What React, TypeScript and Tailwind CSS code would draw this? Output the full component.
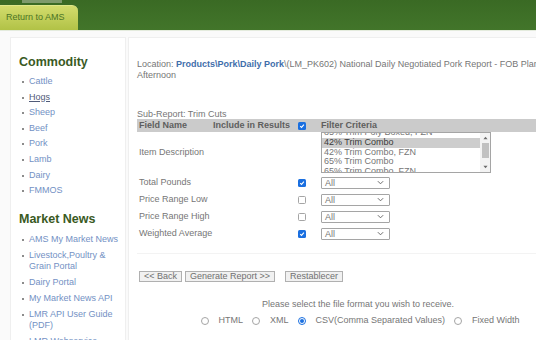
import type { ReactNode } from "react";

const COMMODITIES = ["Cattle", "Hogs", "Sheep", "Beef", "Pork", "Lamb", "Dairy", "FMMOS"];
const MARKET_NEWS = [
  "AMS My Market News",
  "Livestock,Poultry & Grain Portal",
  "Dairy Portal",
  "My Market News API",
  "LMR API User Guide (PDF)",
  "LMR Webservice",
];
const ITEMS = ["85% Trim Poly Boxed, FZN", "42% Trim Combo", "42% Trim Combo, FZN", "65% Trim Combo", "65% Trim Combo, FZN"];
const FIELDS = [
  { name: "Total Pounds", on: true },
  { name: "Price Range Low", on: false },
  { name: "Price Range High", on: false },
  { name: "Weighted Average", on: true },
];

function Check({ on }: { on: boolean }) {
  return on ? (
    <span className="flex h-[8px] w-[8px] items-center justify-center rounded-[1.5px] bg-[#1a6fe0]">
      <svg width="6" height="6" viewBox="0 0 10 10">
        <path d="M2 5.2 L4.2 7.4 L8.2 2.8" fill="none" stroke="white" strokeWidth="1.8" />
      </svg>
    </span>
  ) : (
    <span className="block h-[8px] w-[8px] rounded-[1.5px] border border-[#a5a5a5] bg-white" />
  );
}

function Radio({ on, children }: { on?: boolean; children: ReactNode }) {
  return (
    <span className="flex items-center gap-[10px]">
      {on ? (
        <span className="flex h-[8px] w-[8px] items-center justify-center rounded-full border border-[#1a6fe0]">
          <span className="h-[4px] w-[4px] rounded-full bg-[#1a6fe0]" />
        </span>
      ) : (
        <span className="block h-[8px] w-[8px] rounded-full border border-[#a5a5a5] bg-white" />
      )}
      <span>{children}</span>
    </span>
  );
}

function SelectAll() {
  return (
    <div className="flex h-[12px] w-[69px] items-center justify-between rounded-[1px] border border-[#a5a5a5] bg-white pl-[3px] pr-[5px]">
      <span className="leading-[10px]">All</span>
      <svg width="7" height="5" viewBox="0 0 8 5">
        <path d="M1 1 L4 4 L7 1" fill="none" stroke="#666" strokeWidth="1.1" />
      </svg>
    </div>
  );
}

function Btn({ children }: { children: ReactNode }) {
  return (
    <span className="flex h-[11px] items-center border border-[#b0b0b0] bg-[#f1f1f1] px-[4px] leading-[9px] text-[#707070]">
      {children}
    </span>
  );
}

function Sidebar() {
  return (
    <aside className="ml-[10px] w-[116px] shrink-0 border border-[#efefef] bg-white pl-[8px] pt-[17px] text-[9px]">
      <h2 className="mb-[7px] text-[12.5px] font-bold leading-[14px] text-[#3a5a1f]">Commodity</h2>
      <ul className="flex flex-col gap-[4.6px] pl-[3px]">
        {COMMODITIES.map((c) => (
          <li key={c} className="flex gap-[5px] leading-[11px]">
            <span className="mt-[5px] h-[2px] w-[2px] shrink-0 rounded-full bg-[#666]" />
            <span className={c === "Hogs" ? "text-[#505a78] underline" : "text-[#7391c4]"}>{c}</span>
          </li>
        ))}
      </ul>
      <h2 className="mb-[8px] mt-[16px] text-[12.5px] font-bold leading-[14px] text-[#3a5a1f]">Market News</h2>
      <ul className="flex flex-col gap-[5px] pl-[3px]">
        {MARKET_NEWS.map((c) => (
          <li key={c} className="flex gap-[5px] leading-[11px]">
            <span className="mt-[5px] h-[2px] w-[2px] shrink-0 rounded-full bg-[#666]" />
            <span className="text-[#7391c4]">{c}</span>
          </li>
        ))}
      </ul>
    </aside>
  );
}

function ItemList() {
  return (
    <div className="flex h-[41px] w-[170px] border border-[#a5a5a5] bg-white">
      <div className="flex-1 overflow-hidden">
        <div className="-mt-[5px] flex flex-col">
          {ITEMS.map((it, i) => (
            <div
              key={it}
              className={`h-[9.8px] pl-[2px] leading-[9.8px] ${i === 1 ? "bg-[#cdcdcd] text-[#3a3a3a]" : "text-[#767676]"}`}
            >
              {it}
            </div>
          ))}
        </div>
      </div>
      <div className="flex w-[10px] flex-col items-center bg-[#f3f3f3]">
        <svg width="5" height="6" viewBox="0 0 6 6" className="mt-[2px]">
          <path d="M0.5 4.5 L3 1.5 L5.5 4.5 Z" fill="#6a6a6a" />
        </svg>
        <span className="mt-[2px] h-[15px] w-[7px] bg-[#c1c1c1]" />
        <svg width="5" height="6" viewBox="0 0 6 6" className="mt-auto mb-[2px]">
          <path d="M0.5 1.5 L3 4.5 L5.5 1.5 Z" fill="#6a6a6a" />
        </svg>
      </div>
    </div>
  );
}

function MainPanel() {
  return (
    <main className="ml-[2px] w-[462px] shrink-0 border border-[#efefef] bg-white pl-[8px] pr-[10px] pt-[21px] text-[9px] text-[#767676]">
      <p className="leading-[11px]">
        Location: <span className="font-bold text-[#3f6eab]">Products\Pork\Daily Pork</span>
        \(LM_PK602) National Daily Negotiated Pork Report - FOB Plant - Afternoon
      </p>
      <p className="mt-[29px] h-[9px] leading-[9px]">Sub-Report: Trim Cuts</p>
      <div className="grid grid-cols-[75px_84px_22px_1fr]">
        <div className="flex h-[13px] items-center bg-[#cbcbcb] pl-[2px] font-bold text-[#5e5e5e]">Field Name</div>
        <div className="flex h-[13px] items-center bg-[#cbcbcb] pl-[1px] font-bold text-[#5e5e5e]">Include in Results</div>
        <div className="flex h-[13px] items-center bg-[#cbcbcb] pl-[2px]">
          <Check on />
        </div>
        <div className="flex h-[13px] items-center bg-[#cbcbcb] pl-[3px] font-bold text-[#5e5e5e]">Filter Criteria</div>

        <div className="col-span-2 flex items-center pl-[2px]">Item Description</div>
        <div />
        <div className="pl-[3px] pb-[1px]">
          <ItemList />
        </div>

        {FIELDS.map((f) => (
          <div key={f.name} className="col-span-4 grid h-[17px] grid-cols-[159px_22px_1fr] items-center">
            <span className="pl-[2px]">{f.name}</span>
            <span className="pl-[2px]">
              <Check on={f.on} />
            </span>
            <span className="pl-[3px]">
              <SelectAll />
            </span>
          </div>
        ))}
      </div>
      <div className="mt-[11px] h-px bg-[#f3f3f3]" />
      <div className="mt-[17px] flex items-center pl-[2px]">
        <Btn>&lt;&lt; Back</Btn>
        <span className="ml-[3px]">
          <Btn>Generate Report &gt;&gt;</Btn>
        </span>
        <span className="ml-[10px]">
          <Btn>Restablecer</Btn>
        </span>
      </div>
      <p className="mt-[17px] text-center leading-[11px]">Please select the file format you wish to receive.</p>
      <div className="mt-[4px] flex items-center justify-center gap-[9px] pl-[4px]">
        <Radio>HTML</Radio>
        <Radio>XML</Radio>
        <Radio on>CSV(Comma Separated Values)</Radio>
        <Radio>Fixed Width</Radio>
      </div>
    </main>
  );
}

export default function App() {
  return (
    <div className="relative h-[340px] w-[536px] overflow-hidden bg-[#fafafa] font-['Liberation_Sans',Arial,sans-serif]">
      <header className="flex h-[30px] flex-col bg-gradient-to-b from-[#3a6a24] to-[#42752a]">
        <div className="ml-[22px] h-[3px] w-[40px] bg-[#7e9a6c]" />
        <div className="mt-[2px] flex h-[25px] w-[78px] items-center rounded-tr-[6px] border-t border-[#dfe78a] bg-gradient-to-b from-[#d3dc6c] to-[#b1c246] pl-[6px] text-[9px] text-[#4b7526]">
          Return to AMS
        </div>
      </header>
      <div className="h-px bg-[#e4ebdd]" />
      <div className="flex pt-[6px]">
        <Sidebar />
        <MainPanel />
      </div>
    </div>
  );
}
